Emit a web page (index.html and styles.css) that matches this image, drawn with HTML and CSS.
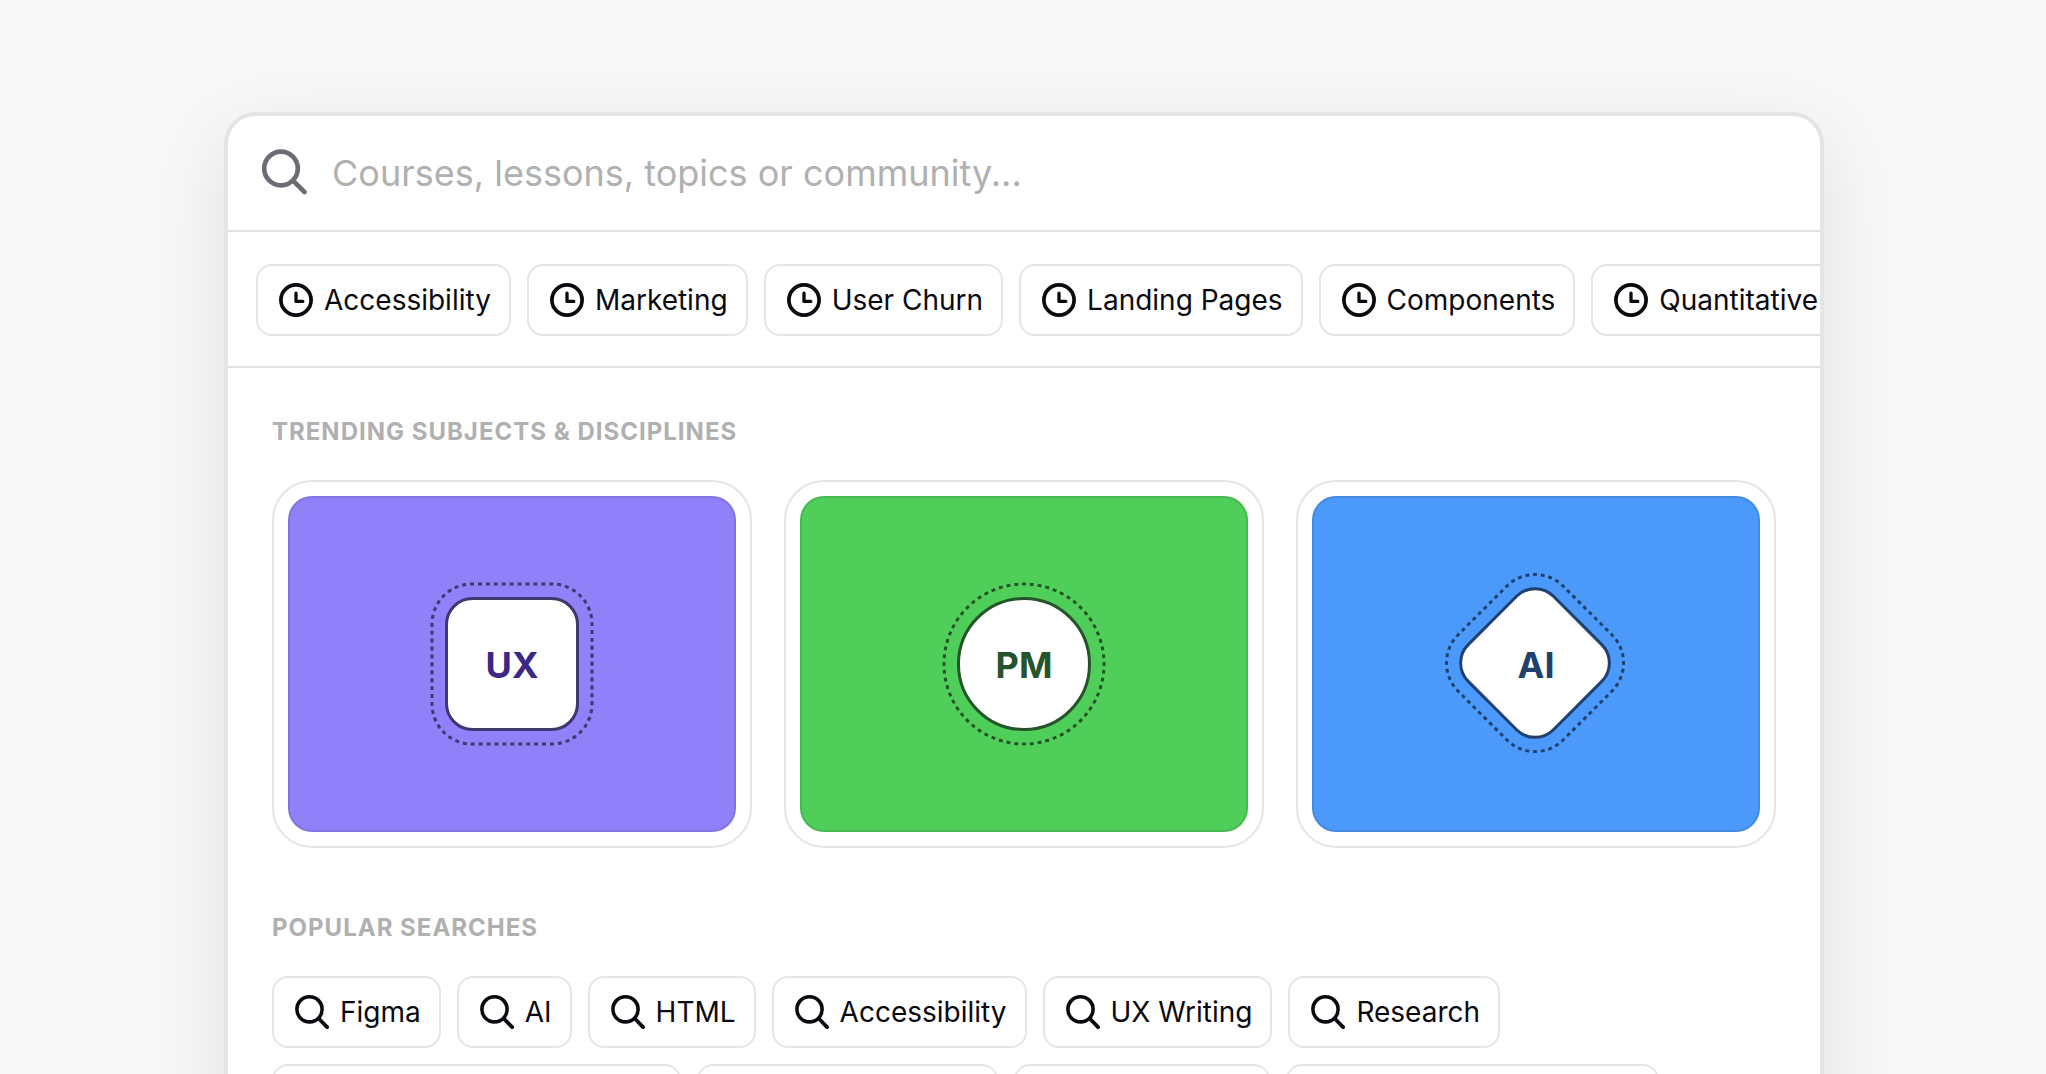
FILE: index.html
```html
<!DOCTYPE html>
<html lang="en">
<head>
  <meta charset="UTF-8">
  <meta name="viewport" content="width=device-width, initial-scale=1.0">
  <title>Search</title>
  <link rel="stylesheet" href="styles.css">
</head>
<body>
  <!-- Shared icons -->
  <svg class="sprite" aria-hidden="true">
    <symbol id="icon-clock" viewBox="0 0 40 40">
      <circle cx="20" cy="20" r="15.1" stroke-width="3.7"/>
      <path d="M20 13.2v8.2h6.8" stroke-width="3.3"/>
    </symbol>
    <symbol id="icon-search" viewBox="0 0 40 40">
      <circle cx="17.5" cy="17.3" r="12.6" stroke-width="3.6"/>
      <path d="M26.7 26.5l8.4 8.6" stroke-width="3.8"/>
    </symbol>
  </svg>

  <main class="panel">
    <form class="search" role="search">
      <svg class="search-icon" viewBox="0 0 48 48" aria-hidden="true">
        <circle cx="21" cy="19.5" r="16.8"/>
        <path d="M33.3 31.8l11.2 11.2"/>
      </svg>
      <input type="text" class="search-input" placeholder="Courses, lessons, topics or community..." aria-label="Search">
    </form>

    <!-- Recent searches -->
    <div class="recent">
      <button type="button" class="chip"><svg class="icon"><use href="#icon-clock"/></svg>Accessibility</button>
      <button type="button" class="chip"><svg class="icon"><use href="#icon-clock"/></svg>Marketing</button>
      <button type="button" class="chip"><svg class="icon"><use href="#icon-clock"/></svg>User Churn</button>
      <button type="button" class="chip"><svg class="icon"><use href="#icon-clock"/></svg>Landing Pages</button>
      <button type="button" class="chip"><svg class="icon"><use href="#icon-clock"/></svg>Components</button>
      <button type="button" class="chip"><svg class="icon"><use href="#icon-clock"/></svg>Quantitative</button>
    </div>

    <section class="section">
      <h2>Trending Subjects &amp; Disciplines</h2>
      <div class="cards">
        <a href="#" class="card">
          <div class="card-cover ux">
            <svg class="badge" viewBox="0 0 180 180">
              <rect class="dashes" x="10" y="10" width="160" height="160" rx="40" pathLength="576"/>
              <rect class="shape" x="24.5" y="24.5" width="131" height="131" rx="26"/>
            </svg>
            <span class="label">UX</span>
          </div>
        </a>
        <a href="#" class="card">
          <div class="card-cover pm">
            <svg class="badge" viewBox="0 0 180 180">
              <circle class="dashes" cx="90" cy="90" r="80" pathLength="512"/>
              <circle class="shape" cx="90" cy="90" r="65.5"/>
            </svg>
            <span class="label">PM</span>
          </div>
        </a>
        <a href="#" class="card">
          <div class="card-cover ai">
            <svg class="badge" viewBox="1 1 180 180">
              <path class="dashes" pathLength="544" d="M90 1.5A40 40 0 0 1 118.3 13.2L166.8 61.7A40 40 0 0 1 166.8 118.3L118.3 166.8A40 40 0 0 1 61.7 166.8L13.2 118.3A40 40 0 0 1 13.2 61.7L61.7 13.2A40 40 0 0 1 90 1.5z"/>
              <rect class="shape" x="29.8" y="29.8" width="120.4" height="120.4" rx="26" transform="rotate(45 90 90)"/>
            </svg>
            <span class="label">AI</span>
          </div>
        </a>
      </div>
    </section>

    <section class="section">
      <h2>Popular Searches</h2>
      <div class="popular">
        <button type="button" class="chip"><svg class="icon"><use href="#icon-search"/></svg>Figma</button>
        <button type="button" class="chip"><svg class="icon"><use href="#icon-search"/></svg>AI</button>
        <button type="button" class="chip"><svg class="icon"><use href="#icon-search"/></svg>HTML</button>
        <button type="button" class="chip"><svg class="icon"><use href="#icon-search"/></svg>Accessibility</button>
        <button type="button" class="chip"><svg class="icon"><use href="#icon-search"/></svg>UX Writing</button>
        <button type="button" class="chip"><svg class="icon"><use href="#icon-search"/></svg>Research</button>
      </div>
      <div class="popular">
        <button type="button" class="chip"><svg class="icon"><use href="#icon-search"/></svg>Information Architecture</button>
        <button type="button" class="chip"><svg class="icon"><use href="#icon-search"/></svg>Design Systems</button>
        <button type="button" class="chip"><svg class="icon"><use href="#icon-search"/></svg>Components</button>
        <button type="button" class="chip"><svg class="icon"><use href="#icon-search"/></svg>Product Management</button>
      </div>
    </section>
  </main>
</body>
</html>
```

FILE: styles.css
```css
* {
  box-sizing: border-box;
}

body {
  margin: 0;
  padding: 112px 222px 0 224px;
  height: 100vh;
  overflow: hidden;
  background-color: #f8f8f8;
  color: #09090f;
  font-family: Inter, sans-serif;
}

.sprite {
  display: none;
}

.panel {
  padding-bottom: 48px;
  border: 4px solid #e5e5e5;
  border-radius: 32px;
  background-color: #fff;
  box-shadow: 0 24px 80px rgba(0, 0, 0, 0.1);
  overflow: hidden;
}

/* Search bar */
.search {
  display: flex;
  align-items: center;
  gap: 24px;
  height: 116px;
  padding: 0 32px;
  border-bottom: 2px solid #e5e5e5;
}

.search-icon {
  flex: none;
  width: 48px;
  height: 48px;
  fill: none;
  stroke: #6c6c74;
  stroke-width: 4.7;
  stroke-linecap: round;
}

.search-input {
  flex: 1;
  min-width: 0;
  padding: 0;
  border: 0;
  outline: 0;
  background: none;
  color: #09090f;
  font-family: inherit;
  font-size: 36px;
  line-height: 48px;
}

.search-input::placeholder {
  color: #b0b0b1;
  opacity: 1;
}

/* Chips */
.recent {
  display: flex;
  gap: 16px;
  padding: 32px 28px 30px;
  border-bottom: 2px solid #e5e5e5;
  overflow: hidden;
}

.popular {
  display: flex;
  gap: 16px;
  margin-bottom: 16px;
}

.chip {
  display: flex;
  flex: none;
  align-items: center;
  gap: 8px;
  height: 72px;
  padding: 0 18px;
  border: 2px solid #e5e5e5;
  border-radius: 16px;
  background-color: #fff;
  color: #09090f;
  font-family: inherit;
  font-size: 28px;
  line-height: 40px;
  white-space: nowrap;
  cursor: pointer;
}

.icon {
  width: 40px;
  height: 40px;
  fill: none;
  stroke: currentColor;
  stroke-linecap: round;
  stroke-linejoin: round;
}

/* Sections */
.section {
  padding: 48px 44px 0;
}

.section + .section {
  padding-top: 64px;
}

.section h2 {
  margin: 0 0 32px;
  color: #b0b0b1;
  font-size: 24px;
  font-weight: 700;
  line-height: 32px;
  letter-spacing: 1px;
  text-transform: uppercase;
}

/* Subject cards */
.cards {
  display: grid;
  grid-template-columns: repeat(3, 1fr);
  gap: 32px;
}

.card {
  padding: 14px;
  border: 2px solid #e5e5e5;
  border-radius: 40px;
  text-decoration: none;
}

.card-cover {
  display: grid;
  place-items: center;
  aspect-ratio: 4 / 3;
  border-radius: 24px;
  box-shadow: inset 0 0 0 2px rgba(0, 0, 0, 0.1);
}

.badge,
.label {
  grid-area: 1 / 1;
}

.badge {
  width: 180px;
  height: 180px;
  overflow: visible;
  fill: none;
  stroke-width: 3;
}

.shape {
  fill: #fff;
}

.dashes {
  stroke-dasharray: 4 4;
  stroke-dashoffset: 2;
}

.label {
  padding-top: 2px;
  font-size: 36px;
  font-weight: 700;
  line-height: 44px;
}

.ux {
  background-color: #9181f9;
  color: #3a2786;
  stroke: #3f376d;
}

.pm {
  background-color: #4fce5a;
  color: #25532a;
  stroke: #25532a;
}

.ai {
  background-color: #4b9afb;
  color: #20416b;
  stroke: #20416b;
}
```
